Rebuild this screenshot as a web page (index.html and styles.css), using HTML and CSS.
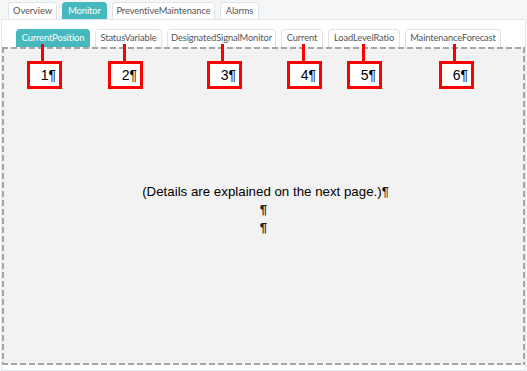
FILE: index.html
```html
<!DOCTYPE html>
<html lang="en">
<head>
    <meta charset="UTF-8">
    <meta name="viewport" content="width=device-width, initial-scale=1.0">
    <title>Monitor</title>
    <link rel="stylesheet" href="styles.css">
</head>
<body>
    <div class="topbar">
        <div class="tab">Overview</div>
        <div class="tab active">Monitor</div>
        <div class="tab">PreventiveMaintenance</div>
        <div class="tab">Alarms</div>
    </div>
    <div class="panel">
        <div class="subtabs">
            <div class="subtab active">CurrentPosition</div>
            <div class="subtab">StatusVariable</div>
            <div class="subtab">DesignatedSignalMonitor</div>
            <div class="subtab">Current</div>
            <div class="subtab">LoadLevelRatio</div>
            <div class="subtab">MaintenanceForecast</div>
        </div>
        <div class="area">
            <p class="note">(Details are explained on the next page.)¶</p>
            <p class="mark">¶</p>
            <p class="mark">¶</p>
        </div>

        <!-- annotation callouts -->
        <div class="line l1"></div>
        <div class="line l2"></div>
        <div class="line l3"></div>
        <div class="line l4"></div>
        <div class="line l5"></div>
        <div class="line l6"></div>
        <div class="callout c1">1¶</div>
        <div class="callout c2">2¶</div>
        <div class="callout c3">3¶</div>
        <div class="callout c4">4¶</div>
        <div class="callout c5">5¶</div>
        <div class="callout c6">6¶</div>
    </div>
</body>
</html>
```

FILE: styles.css
```css
body {
    margin: 0;
    font-family: Lato, "Noto Sans", sans-serif;
    background-color: #ffffff;
}
.topbar {
    display: flex;
    align-items: flex-end;
    gap: 5px;
    height: 19px;
    padding-left: 8px;
    background-color: #f4f6f8;
}
.tab {
    box-sizing: border-box;
    height: 17px;
    line-height: 16px;
    border: 1px solid #dfe4e8;
    border-bottom: none;
    border-radius: 4px 4px 0 0;
    background: white;
    font-size: 9.3px;
    letter-spacing: -0.1px;
    text-align: center;
    color: #555;
}
.tab:nth-child(1) { width: 49px; }
.tab:nth-child(2) { width: 45px; }
.tab:nth-child(3) { width: 103px; }
.tab:nth-child(4) { width: 39px; }
.tab.active {
    background-color: #47b8be;
    border-color: #47b8be;
    color: white;
}
.panel {
    position: relative;
    margin: 0 1px;
    height: 350px;
    border: 1px solid #e1e6ea;
    background: white;
}
.subtabs {
    display: flex;
    gap: 5px;
    padding: 9px 0 0 14px;
}
.subtab {
    box-sizing: border-box;
    height: 18px;
    line-height: 16px;
    border: 1px solid #e0e4e8;
    border-bottom: none;
    border-radius: 4px 4px 0 0;
    background: white;
    font-size: 9.3px;
    letter-spacing: -0.1px;
    text-align: center;
    color: #555;
}
.subtab:nth-child(1) { width: 74px; }
.subtab:nth-child(2) { width: 67px; }
.subtab:nth-child(3) { width: 109px; }
.subtab:nth-child(4) { width: 42px; }
.subtab:nth-child(5) { width: 72px; }
.subtab:nth-child(6) { width: 96px; }
.subtab.active {
    background-color: #47b8be;
    border-color: #47b8be;
    color: white;
}
/* dashed frame drawn with gradients: 6px dash, 3px gap */
.area {
    margin: 0;
    height: 318px;
    background:
        repeating-linear-gradient(90deg, #a6a6a6 0 6px, transparent 6px 9px) top left / 100% 2px no-repeat,
        repeating-linear-gradient(90deg, #a6a6a6 0 6px, transparent 6px 9px) bottom left / 100% 2px no-repeat,
        repeating-linear-gradient(180deg, #a6a6a6 0 6px, transparent 6px 9px) top left / 2px 100% no-repeat,
        repeating-linear-gradient(180deg, #a6a6a6 0 6px, transparent 6px 9px) top right / 2px 100% no-repeat,
        #f2f2f2;
    font-family: "Liberation Sans", Arial, sans-serif;
    color: #000;
    text-align: center;
    padding-top: 136px;
    box-sizing: border-box;
}
.area p {
    margin: 0;
    font-size: 13.3px;
    line-height: 18px;
}
.note {
    padding-left: 4px;
}
.mark {
    font-weight: bold;
    color: #222;
}
.line {
    position: absolute;
    top: 24px;
    width: 3px;
    height: 18px;
    background: #ff0000;
}
.l1 { left: 39px; }
.l2 { left: 121px; }
.l3 { left: 219px; }
.l4 { left: 300px; }
.l5 { left: 360px; }
.l6 { left: 451px; }
.callout {
    position: absolute;
    top: 41px;
    width: 26px;
    height: 22px;
    border: 3px solid #ff0000;
    background: white;
    font-family: "Liberation Sans", Arial, sans-serif;
    font-size: 14px;
    line-height: 22px;
    text-align: right;
    padding-right: 3px;
    color: #000;
}
.c1 { left: 25px; }
.c2 { left: 106px; }
.c3 { left: 205px; }
.c4 { left: 285px; }
.c5 { left: 345px; }
.c6 { left: 437px; }
```
